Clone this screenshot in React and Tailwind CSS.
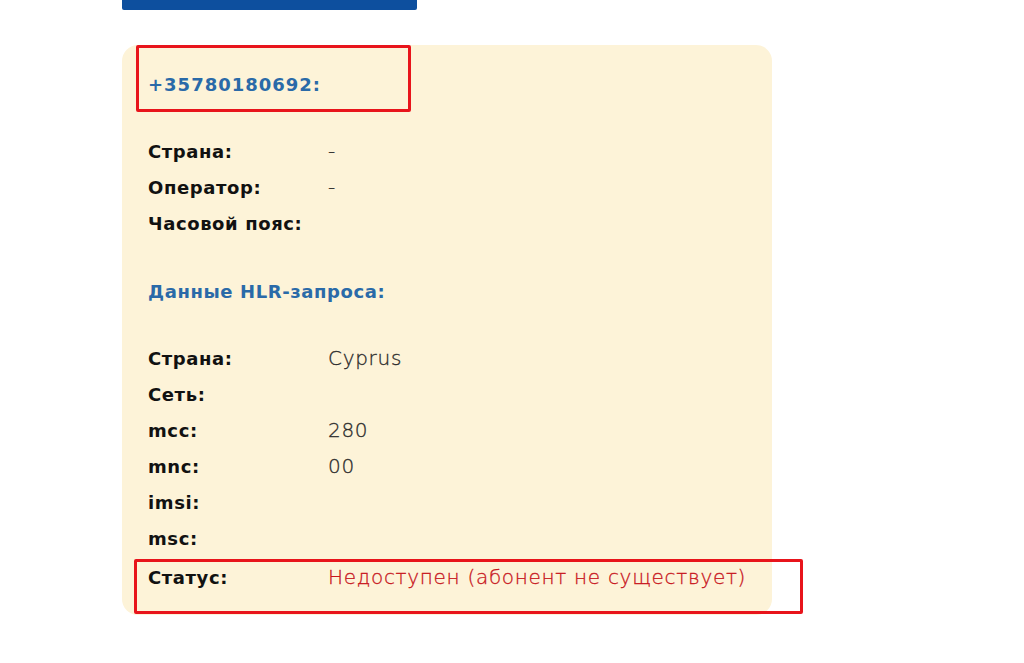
import React from 'react';

const Row = ({ label, value, valueClass = 'text-[#2a2a2a]' }) => (
  <div className="flex items-center h-[36px] whitespace-nowrap">
    <div className="w-[180px] shrink-0 font-bold text-[18px] tracking-[0.6px] text-[#111]">{label}</div>
    <div className={`font-light text-[20px] tracking-[0.7px] [-webkit-text-stroke:0.3px_currentColor] ${valueClass}`}>{value}</div>
  </div>
);

const App = () => {
  return (
    <div className="relative w-[1024px] h-[663px] bg-white overflow-hidden" style={{ fontFamily: '"DejaVu Sans", "Noto Sans", sans-serif' }}>
      <div className="ml-[122px] w-[295px] h-[10px] bg-[#0d4f9e] rounded-b-[2px]" />

      <div className="relative ml-[122px] mt-[35px] w-[650px] h-[570px] bg-[#fdf3d8] rounded-[16px] px-[26px] pt-[26px]">
        <div className="h-[26px] flex items-center font-bold text-[18px] tracking-[1px] text-[#2a6aa8]">+35780180692:</div>

        <div className="mt-[36px]">
          <Row label="Страна:" value="-" />
          <Row label="Оператор:" value="-" />
          <Row label="Часовой пояс:" value="" />
        </div>

        <div className="mt-[32px] h-[36px] flex items-center font-bold text-[18px] tracking-[0.6px] text-[#2a6aa8]">Данные HLR-запроса:</div>

        <div className="mt-[31px]">
          <Row label="Страна:" value="Cyprus" />
          <Row label="Сеть:" value="" />
          <Row label="mcc:" value="280" />
          <Row label="mnc:" value="00" />
          <Row label="imsi:" value="" />
          <Row label="msc:" value="" />
          <div className="mt-[3px]">
            <Row label="Статус:" value="Недоступен (абонент не существует)" valueClass="text-[#c8161d]" />
          </div>
        </div>
      </div>

      <div className="absolute left-[136px] top-[45px] w-[275px] h-[67px] border-[3px] border-[#e8141b] rounded-[2px]" />
      <div className="absolute left-[134px] top-[559px] w-[669px] h-[55px] border-[3px] border-[#e8141b] rounded-[2px]" />
    </div>
  );
};

export default App;
